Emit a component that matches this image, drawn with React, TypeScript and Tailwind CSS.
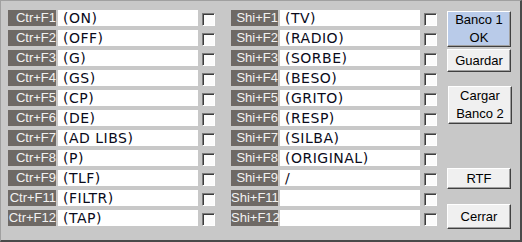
import React from "react"

const leftRows = [
  ["Ctr+F1", "(ON)"],
  ["Ctr+F2", "(OFF)"],
  ["Ctr+F3", "(G)"],
  ["Ctr+F4", "(GS)"],
  ["Ctr+F5", "(CP)"],
  ["Ctr+F6", "(DE)"],
  ["Ctr+F7", "(AD LIBS)"],
  ["Ctr+F8", "(P)"],
  ["Ctr+F9", "(TLF)"],
  ["Ctr+F11", "(FILTR)"],
  ["Ctr+F12", "(TAP)"],
]

const rightRows = [
  ["Shi+F1", "(TV)"],
  ["Shi+F2", "(RADIO)"],
  ["Shi+F3", "(SORBE)"],
  ["Shi+F4", "(BESO)"],
  ["Shi+F5", "(GRITO)"],
  ["Shi+F6", "(RESP)"],
  ["Shi+F7", "(SILBA)"],
  ["Shi+F8", "(ORIGINAL)"],
  ["Shi+F9", "/"],
  ["Shi+F11", ""],
  ["Shi+F12", ""],
]

function Row({ label, value, labelWidth }: { label: string; value: string; labelWidth: string }) {
  return (
    <div className="flex h-4 items-start">
      <div className={`${labelWidth} h-4 bg-[#6e6965] text-[#f2f2f2] text-right leading-4 whitespace-nowrap`}>
        {label}
      </div>
      <div className="ml-[2px] w-[140px] h-4 bg-white text-[#0a0a1a] text-[14px] tracking-[0.5px] leading-[17px] pl-[5px] whitespace-nowrap overflow-hidden font-['DejaVu_Sans',sans-serif]">
        {value}
      </div>
      <div className="ml-[4px] mt-[3px] w-[13px] h-[13px] border-t border-l border-t-[#7a7a7a] border-l-[#7a7a7a] border-r border-b border-r-white border-b-white bg-[#fbfbfb] shadow-[inset_1px_1px_0_#3c3c3c]" />
    </div>
  )
}

function Btn({ children, className = "", blue = false }: { children: React.ReactNode; className?: string; blue?: boolean }) {
  return (
    <button
      type="button"
      className={`w-[64px] flex items-center justify-center text-center leading-[18px] text-black border border-t-white border-l-white border-r-[#404040] border-b-[#404040] shadow-[inset_-1px_-1px_0_#a0a0a0] ${blue ? "bg-[#b9cbe9]" : "bg-[#f0f0f0]"} ${className}`}
    >
      {children}
    </button>
  )
}

export default function App() {
  return (
    <div
      className="w-[522px] h-[242px] bg-[#c8c8c8] border-t border-l border-t-[#a0a0a0] border-l-[#a0a0a0] border-r-2 border-b-2 border-r-[#4a4a4a] border-b-[#4a4a4a] text-[13px] flex"
      style={{ fontFamily: '"Liberation Sans", Arial, sans-serif' }}
    >
      <div className="flex flex-col gap-1 pt-[9px] pl-[7px]">
        {leftRows.map(([l, v]) => (
          <Row key={l} label={l} value={v} labelWidth="w-[48px]" />
        ))}
      </div>
      <div className="flex flex-col gap-1 pt-[9px] ml-[16px]">
        {rightRows.map(([l, v]) => (
          <Row key={l} label={l} value={v} labelWidth="w-[47px]" />
        ))}
      </div>
      <div className="flex flex-col pt-[10px] ml-[10px]">
        <Btn blue className="h-[36px]">
          Banco 1<br />OK
        </Btn>
        <Btn className="h-[23px] mt-[2px]">Guardar</Btn>
        <Btn className="h-[38px] mt-[14px] ml-[1px]">
          Cargar<br />Banco 2
        </Btn>
        <Btn className="h-[21px] mt-[44px]">RTF</Btn>
        <Btn className="h-[25px] mt-[15px]">Cerrar</Btn>
      </div>
    </div>
  )
}
